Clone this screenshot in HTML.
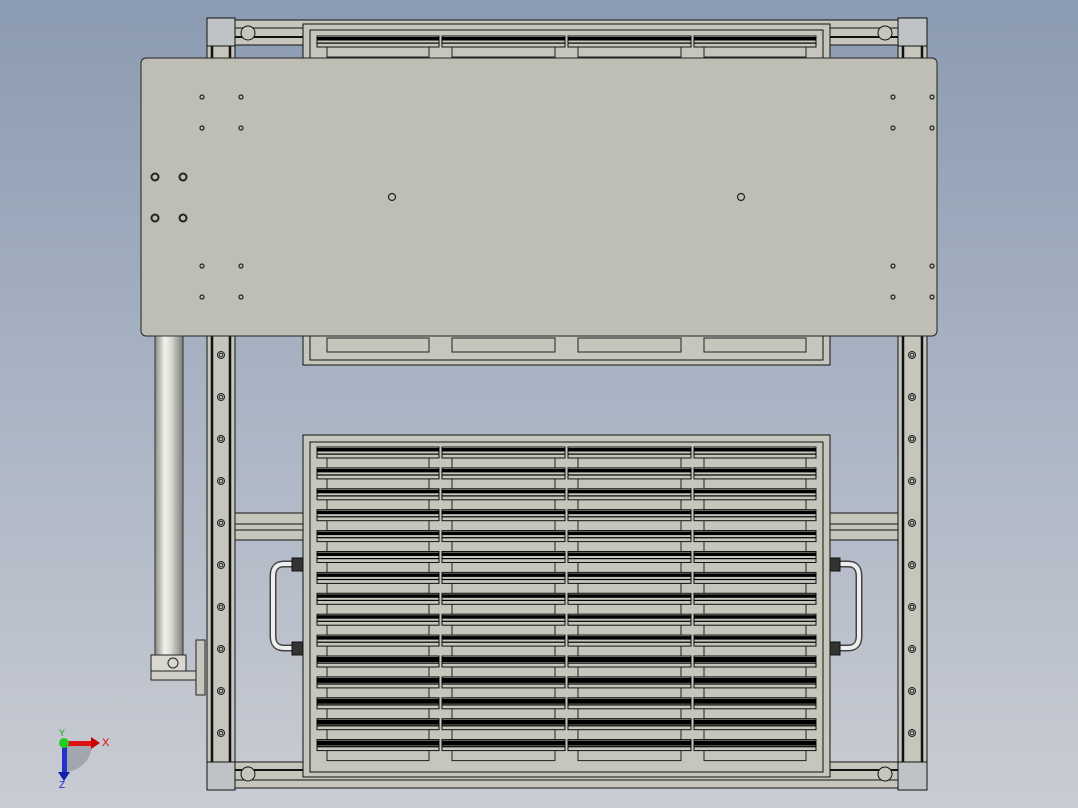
<!DOCTYPE html>
<html><head><meta charset="utf-8"><style>
html,body{margin:0;padding:0;width:1078px;height:808px;overflow:hidden}
svg{display:block}
</style></head><body>
<svg id="s" width="1078" height="808" viewBox="0 0 1078 808" xmlns="http://www.w3.org/2000/svg" font-family="Liberation Sans, sans-serif">
<defs>
<linearGradient id="bg" x1="0" y1="0" x2="0" y2="1">
<stop offset="0" stop-color="#8b9bb1"/><stop offset="0.5" stop-color="#aab4c4"/><stop offset="1" stop-color="#c9ccd3"/></linearGradient>
<linearGradient id="cyl" x1="0" y1="0" x2="1" y2="0">
<stop offset="0" stop-color="#8a8a86"/><stop offset="0.35" stop-color="#f4f4ee"/><stop offset="0.6" stop-color="#d6d6cf"/><stop offset="1" stop-color="#7c7c78"/></linearGradient>
</defs>
<rect width="1078" height="808" fill="url(#bg)"/>
<g stroke="#111" stroke-width="1" fill="#c6c6bd">
<rect x="207" y="20" width="720" height="25"/>
<line x1="235" y1="28" x2="898" y2="28"/><line x1="235" y1="37" x2="898" y2="37" stroke-width="2"/>
<rect x="207" y="762" width="720" height="26"/>
<line x1="235" y1="770" x2="898" y2="770" stroke-width="2"/><line x1="235" y1="780" x2="898" y2="780"/>
<rect x="235" y="513" width="70" height="27"/><line x1="235" y1="524" x2="305" y2="524"/><line x1="235" y1="530" x2="305" y2="530"/>
<rect x="830" y="513" width="68" height="27"/><line x1="830" y1="524" x2="898" y2="524"/><line x1="830" y1="530" x2="898" y2="530"/>
<rect x="207" y="45" width="28" height="717"/>
<rect x="898" y="45" width="29" height="717"/>
<line x1="212" y1="45" x2="212" y2="762" stroke-width="2.5"/><line x1="230" y1="45" x2="230" y2="762" stroke-width="2.5"/>
<line x1="903" y1="45" x2="903" y2="762" stroke-width="2.5"/><line x1="922" y1="45" x2="922" y2="762" stroke-width="2.5"/>
<rect x="207" y="18" width="28" height="28" fill="#bfc3c6"/><rect x="898" y="18" width="29" height="28" fill="#bfc3c6"/>
<rect x="207" y="762" width="28" height="28" fill="#bfc3c6"/><rect x="898" y="762" width="29" height="28" fill="#bfc3c6"/>
<circle cx="248" cy="33" r="7"/><circle cx="885" cy="33" r="7"/>
<circle cx="248" cy="774" r="7"/><circle cx="885" cy="774" r="7"/>
<rect x="303" y="24" width="527" height="341"/><rect x="310" y="30" width="513" height="330"/>
<rect x="303" y="435" width="527" height="342"/><rect x="310" y="442" width="513" height="330"/>
</g>
<g id="slats"></g>
<rect x="141" y="58" width="796" height="278" rx="5" fill="#bfbeb4" stroke="#222" stroke-width="1"/>
<g fill="none" stroke="#222" stroke-width="1.2" id="holes"></g>
<rect x="155" y="336" width="28" height="320" fill="url(#cyl)" stroke="#333"/>
<rect x="151" y="655" width="35" height="16" fill="#d8d8d0" stroke="#222"/>
<circle cx="173" cy="663" r="5" fill="none" stroke="#222"/>
<rect x="151" y="671" width="50" height="9" fill="#cfcfc6" stroke="#222"/>
<rect x="196" y="640" width="9" height="55" fill="#c6c6bd" stroke="#222"/>
<g fill="none" stroke-linecap="round">
<path d="M292,564 H284 Q273,564 273,576 V636 Q273,648 284,648 H292" stroke="#444" stroke-width="7"/>
<path d="M292,564 H284 Q273,564 273,576 V636 Q273,648 284,648 H292" stroke="#eee" stroke-width="4"/>
<path d="M838,564 H848 Q859,564 859,576 V636 Q859,648 848,648 H838" stroke="#444" stroke-width="7"/>
<path d="M838,564 H848 Q859,564 859,576 V636 Q859,648 848,648 H838" stroke="#eee" stroke-width="4"/>
</g>
<g fill="#333" stroke="#111"><rect x="292" y="558" width="11" height="13"/><rect x="292" y="642" width="11" height="13"/><rect x="830" y="558" width="10" height="13"/><rect x="830" y="642" width="10" height="13"/></g>
<path d="M64,744 L92,744 A28,28 0 0 1 64,772 Z" fill="#8a8f96" opacity="0.6"/>
<rect x="62" y="744" width="5" height="30" fill="#2233cc"/><path d="M58,772 L70,772 L64,781Z" fill="#1122aa"/>
<rect x="64" y="741" width="28" height="5" fill="#dd1111"/><path d="M91,737 L100,743 L91,749Z" fill="#cc0000"/>
<circle cx="64" cy="743" r="5" fill="#22cc22"/>
<text x="102" y="746" font-size="11" fill="#e00">X</text>
<text x="59" y="788" font-size="10" fill="#22c">Z</text>
<text x="59" y="736" font-size="9" fill="#0a0">Y</text>
</svg>
<script>
var NS="http://www.w3.org/2000/svg";
function el(p,t,a){var e=document.createElementNS(NS,t);for(var k in a)e.setAttribute(k,a[k]);p.appendChild(e);return e;}
var sl=document.getElementById('slats');
var cols=[[317,122],[442,123],[568,123],[694,122]];
function row(y,thick){cols.forEach(function(c){
 el(sl,'rect',{x:c[0]+10,y:y+8,width:c[1]-20,height:13,fill:'#c6c6bd',stroke:'#222'});
 el(sl,'rect',{x:c[0],y:y,width:c[1],height:11,fill:'#c6c6bd',stroke:'#111'});
 el(sl,'rect',{x:c[0],y:y+1,width:c[1],height:thick,fill:'#000'});
 el(sl,'rect',{x:c[0],y:y+6.5,width:c[1],height:1.2,fill:'#000'});
});}
for(var i=0;i<15;i++){row(447+i*20.9,i>=10?5:3.5);}
row(36,3.5);
cols.forEach(function(c){el(sl,'rect',{x:c[0]+10,y:338,width:c[1]-20,height:14,fill:'#c6c6bd',stroke:'#222'});});
var h=document.getElementById('holes');
[[202,97],[241,97],[202,128],[241,128],[202,266],[241,266],[202,297],[241,297],[893,97],[932,97],[893,128],[932,128],[893,266],[932,266],[893,297],[932,297]].forEach(function(p){el(h,'circle',{cx:p[0],cy:p[1],r:2});});
[[155,177],[183,177],[155,218],[183,218]].forEach(function(p){el(h,'circle',{cx:p[0],cy:p[1],r:3.5,'stroke-width':2});});
el(h,'circle',{cx:392,cy:197,r:3.5});el(h,'circle',{cx:741,cy:197,r:3.5});
var g=document.getElementById('s');
for(var y=355;y<760;y+=42){[221,912].forEach(function(x){el(g,'circle',{cx:x,cy:y,r:3.5,fill:'none',stroke:'#222'});el(g,'circle',{cx:x,cy:y,r:1.8,fill:'none',stroke:'#222'});});}
</script>
</body></html>
